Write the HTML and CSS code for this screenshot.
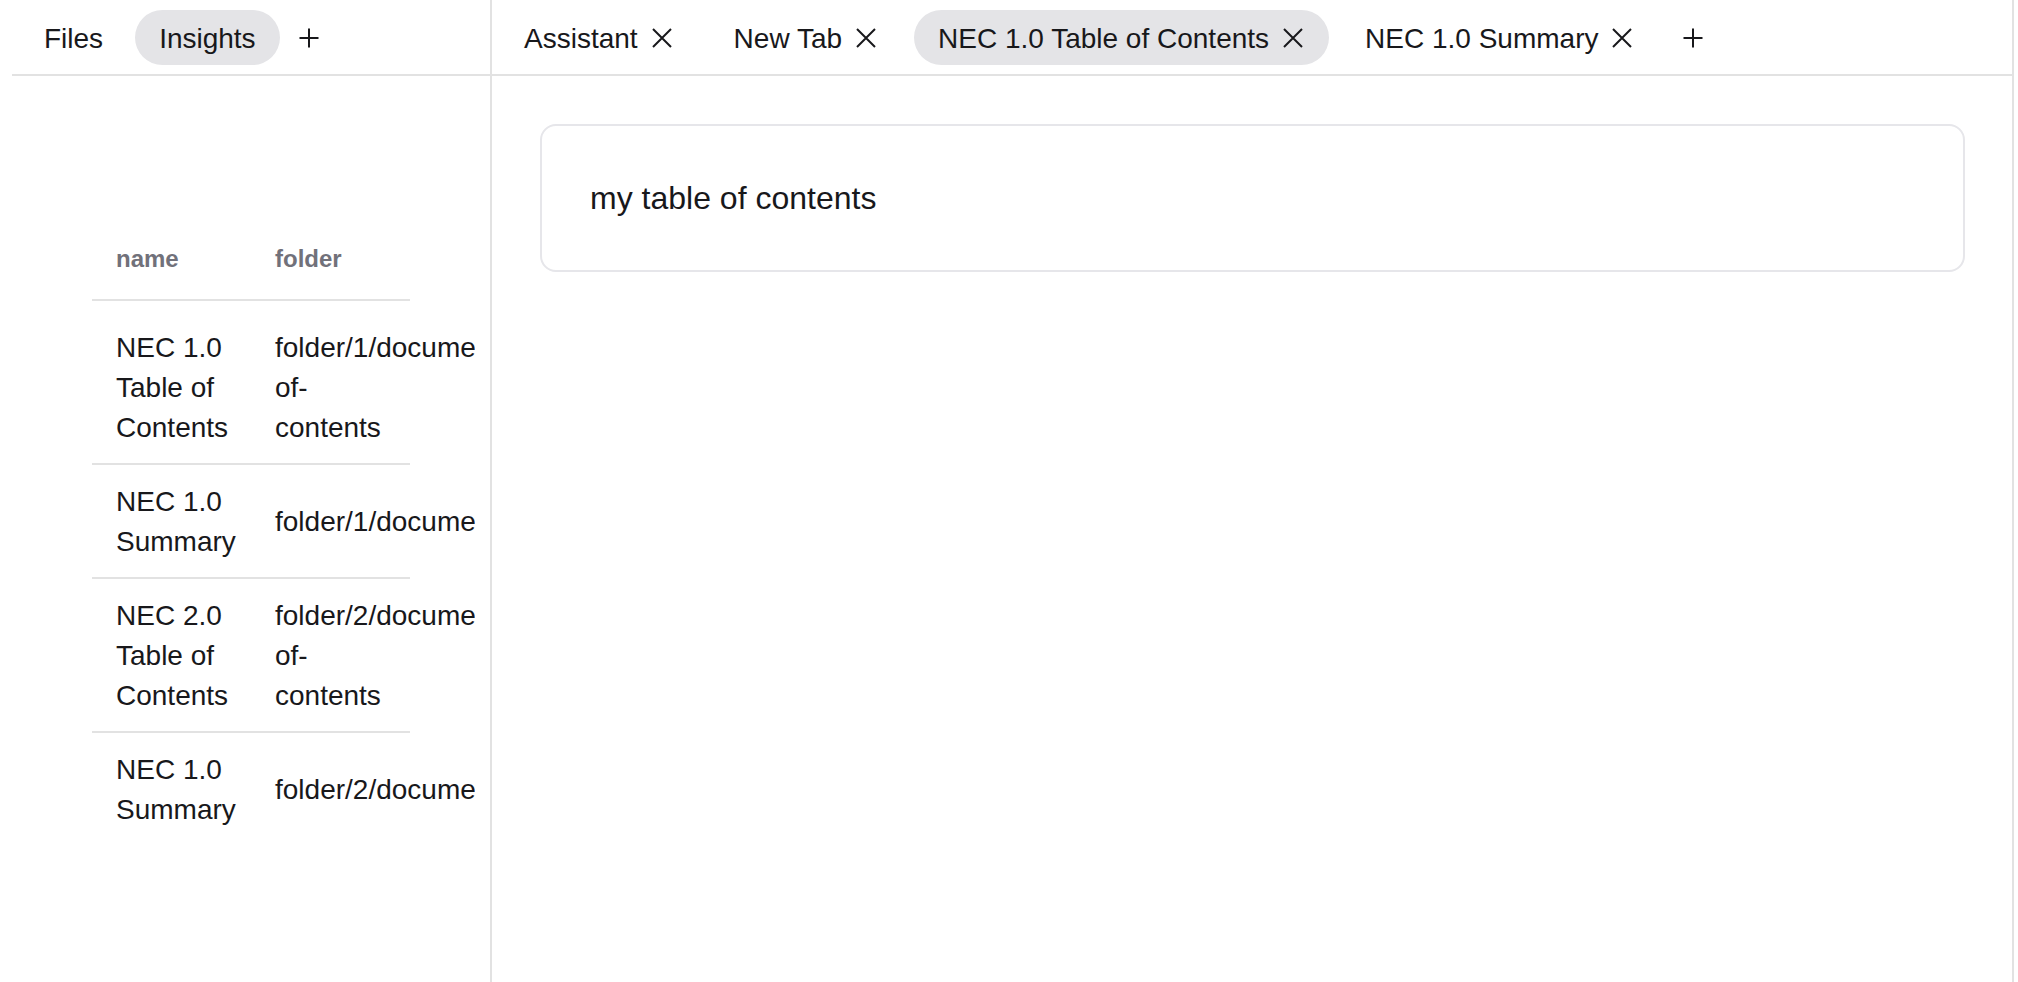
FILE: index.html
```html
<!DOCTYPE html>
<html lang="en">
<head>
<meta charset="utf-8">
<title>Insights</title>
<link rel="stylesheet" href="styles.css">
</head>
<body>
<div class="app">
  <aside class="sidebar">
    <div class="tabbar tabbar-left">
      <button class="tab">Files</button>
      <button class="tab active">Insights</button>
      <button class="add" aria-label="Add tab">
        <svg width="20" height="20" viewBox="0 0 20 20"><path d="M10 0.5V19.5M0.5 10H19.5" stroke="currentColor" stroke-width="2" fill="none"/></svg>
      </button>
    </div>
    <div class="sidebar-body">
      <table class="docs">
        <thead>
          <tr><th>name</th><th>folder</th></tr>
        </thead>
        <tbody>
          <tr><td>NEC 1.0 Table of Contents</td><td>folder/1/document/table-of-contents</td></tr>
          <tr><td>NEC 1.0 Summary</td><td>folder/1/document/summary</td></tr>
          <tr><td>NEC 2.0 Table of Contents</td><td>folder/2/document/table-of-contents</td></tr>
          <tr><td>NEC 1.0 Summary</td><td>folder/2/document/summary</td></tr>
        </tbody>
      </table>
    </div>
  </aside>
  <main class="main">
    <div class="tabbar tabbar-right">
      <button class="tab">Assistant <svg class="x" width="24" height="24" viewBox="0 0 24 24"><path d="M3 3L21 21M21 3L3 21" stroke="currentColor" stroke-width="2" fill="none"/></svg></button>
      <button class="tab">New Tab <svg class="x" width="24" height="24" viewBox="0 0 24 24"><path d="M3 3L21 21M21 3L3 21" stroke="currentColor" stroke-width="2" fill="none"/></svg></button>
      <button class="tab active">NEC 1.0 Table of Contents <svg class="x" width="24" height="24" viewBox="0 0 24 24"><path d="M3 3L21 21M21 3L3 21" stroke="currentColor" stroke-width="2" fill="none"/></svg></button>
      <button class="tab">NEC 1.0 Summary <svg class="x" width="24" height="24" viewBox="0 0 24 24"><path d="M3 3L21 21M21 3L3 21" stroke="currentColor" stroke-width="2" fill="none"/></svg></button>
      <button class="add add-right" aria-label="Add tab">
        <svg width="20" height="20" viewBox="0 0 20 20"><path d="M10 0.5V19.5M0.5 10H19.5" stroke="currentColor" stroke-width="2" fill="none"/></svg>
      </button>
    </div>
    <div class="content">
      <div class="card">my table of contents</div>
    </div>
  </main>
</div>
</body>
</html>
```
FILE: styles.css
```css
html, body {
  margin: 0;
  padding: 0;
  background: #ffffff;
}

body {
  font-family: "Liberation Sans", Arial, Helvetica, sans-serif;
  color: #18181b;
}

.app {
  display: flex;
  height: 982px;
  margin: 0 4px 0 12px;
}

.sidebar {
  width: 478px;
  flex: 0 0 478px;
  border-right: 2px solid #e2e2e2;
  display: flex;
  flex-direction: column;
}

.main {
  flex: 1;
  min-width: 0;
  border-right: 2px solid #e2e2e2;
  display: flex;
  flex-direction: column;
}

.tabbar {
  height: 74px;
  flex: 0 0 74px;
  border-bottom: 2px solid #e2e2e2;
  display: flex;
  align-items: center;
}

.tabbar-left {
  padding-left: 8px;
  gap: 8px;
}

.tabbar-right {
  padding-left: 8px;
  gap: 12px;
}

.tab {
  box-sizing: border-box;
  font-family: inherit;
  font-size: 28px;
  line-height: 32px;
  color: #18181b;
  background: none;
  border: 0;
  height: 55px;
  padding: 4px 24px 0;
  border-radius: 28px;
  display: flex;
  align-items: center;
  gap: 12px;
  white-space: nowrap;
  cursor: pointer;
}

.tab.active {
  background: #e4e4e7;
}

.tab .x {
  display: block;
  flex: 0 0 24px;
  margin-top: -3px;
}

.add {
  background: none;
  border: 0;
  padding: 2px 11px 0;
  height: 55px;
  display: flex;
  align-items: center;
  color: #18181b;
  cursor: pointer;
}

.add-right {
  padding-left: 13px;
}

.add svg {
  display: block;
}

.sidebar-body {
  flex: 1;
  overflow: hidden;
  margin-right: 15px;
  padding: 151px 0 0 80px;
}

.docs {
  table-layout: fixed;
  width: 318px;
  border-collapse: separate;
  border-spacing: 0;
}

.docs th {
  width: 111px;
  font-size: 24px;
  line-height: 32px;
  font-weight: 700;
  color: #71717a;
  text-align: left;
  padding: 16px 24px 24px;
  border-bottom: 2px solid #e2e2e2;
}

.docs td {
  font-size: 28px;
  line-height: 40px;
  padding: 17px 24px 15px;
  vertical-align: middle;
  border-bottom: 2px solid #e2e2e2;
}

.docs tbody tr:first-child td {
  padding-top: 27px;
}

.docs tbody tr:last-child td {
  border-bottom: 0;
}

.content {
  padding: 48px 47px 48px 48px;
}

.card {
  border: 2px solid #e6e6ea;
  border-radius: 16px;
  padding: 48px;
  font-size: 32px;
  line-height: 48px;
  color: #18181b;
}
```
